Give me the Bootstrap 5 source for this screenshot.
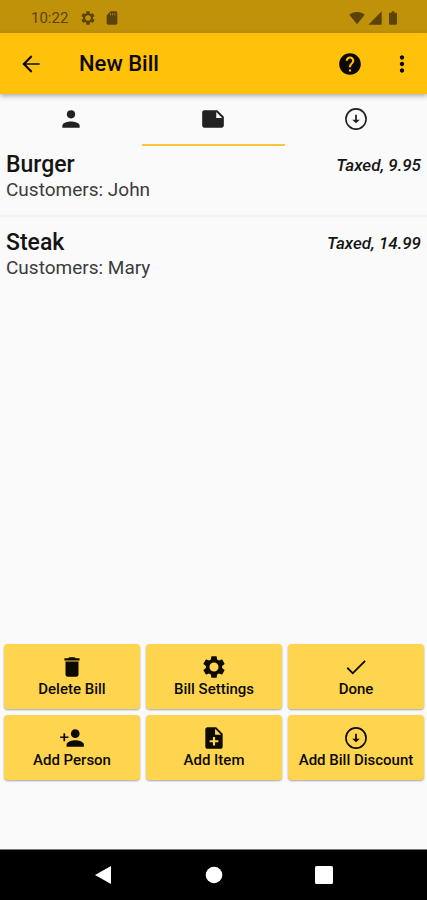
<!DOCTYPE html>
<html lang="en">
<head>
<meta charset="utf-8">
<meta name="viewport" content="width=device-width, initial-scale=1">
<title>New Bill</title>
<link rel="stylesheet" href="https://cdn.jsdelivr.net/npm/bootstrap@5.3.0/dist/css/bootstrap.min.css">
<style>
body { font-family: Roboto, "Liberation Sans", sans-serif; background: #fafafa; color: #151515; }
svg { display: block; fill: currentColor; }
.icon { width: 26px; height: 26px; }
.status-bar { height: 33px; padding: 2px 26px 0 31px; background: #c0920a; color: #5b4406; font-size: 15px; line-height: 20px; }
.status-bar .icon-sm { width: 16px; height: 16px; }
.status-left { gap: 8px; }
.status-time { margin-right: 4px; }
.status-right { gap: 2px; }
.app-bar { height: 61px; padding: 0 12px 0 18px; background: #ffc10a; color: #0c0900; box-shadow: 0 2px 5px rgba(0,0,0,.32); z-index: 1; }
.app-title { font-size: 22px; line-height: 28px; font-weight: 500; margin-left: 35px; padding-top: 1px; }
.app-bar .btn { color: inherit; }
.more-btn { margin-left: 26px; }
.tab-strip .nav-link { height: 52px; color: #212121; border-radius: 0; border-bottom: 2px solid transparent; padding: 0; }
.tab-strip .nav-link.active { border-bottom-color: #fcc53a; }
.bill-item { height: 71px; padding: 6px 6px 0; border-bottom: 2px solid #f3f3f3; }
.bill-item + .bill-item { height: 78px; padding-top: 13px; border-bottom: 0; }
.item-name { font-size: 23px; line-height: 26px; font-weight: 500; }
.item-price { font-size: 17px; line-height: 26px; font-weight: 500; font-style: italic; }
.item-people { font-size: 19px; line-height: 24px; color: #3c3c3c; }
.actions { display: grid; grid-template-columns: repeat(3, minmax(0, 1fr)); gap: 6px; padding: 0 3px 69px 4px; }
.actions .btn { height: 65px; padding: 0 0 1px; background: #ffd54f; color: #0c0a02; border: 0; border-radius: 4px; font-size: 15px; line-height: 18px; font-weight: 500; box-shadow: 0 1px 2px rgba(0,0,0,.35); }
.system-nav { height: 51px; background: #000; border-top: 1px solid #777; gap: 92px; }
.system-nav .btn { color: #fff; }
.system-nav svg { width: 18px; height: 18px; }
</style>
<script src="https://cdn.jsdelivr.net/npm/bootstrap@5.3.0/dist/js/bootstrap.bundle.min.js"></script>
</head>
<body>
<svg class="d-none" aria-hidden="true">
  <symbol id="gear" viewBox="0 0 24 24"><path fill-rule="evenodd" d="M19.430 12.980c.040-.320.070-.640.070-.980s-.030-.660-.070-.980l2.110-1.650c.190-.150.240-.420.120-.640l-2-3.460c-.120-.220-.390-.300-.610-.220l-2.490 1c-.520-.400-1.080-.730-1.690-.980l-.380-2.650C14.460 2.180 14.250 2 14 2h-4c-.250 0-.460.180-.490.420l-.380 2.650c-.610.250-1.170.590-1.690.980l-2.490-1c-.230-.090-.490 0-.610.220l-2 3.460c-.130.220-.070.490.120.640l2.110 1.650c-.040.320-.070.650-.070.980s.030.660.070.980l-2.110 1.650c-.190.150-.240.420-.120.640l2 3.460c.120.220.390.300.610.220l2.490-1c.520.400 1.080.730 1.690.980l.380 2.650c.030.240.240.420.490.420h4c.250 0 .460-.180.490-.420l.380-2.650c.610-.250 1.170-.590 1.690-.980l2.490 1c.230.090.490 0 .610-.220l2-3.460c.120-.220.070-.490-.120-.640l-2.110-1.650zM12 16.200a4.200 4.200 0 1 1 0-8.400 4.200 4.200 0 0 1 0 8.400z"/></symbol>
  <symbol id="discount" viewBox="0 0 24 24"><circle cx="12" cy="12" r="9.300" fill="none" stroke="currentColor" stroke-width="1.500"/><path d="M11.200 8h1.600v4.600h2.700L12 16l-3.500-3.400h2.700z"/></symbol>
</svg>
<div class="d-flex flex-column min-vh-100">
  <div class="status-bar d-flex align-items-center justify-content-between">
    <div class="status-left d-flex align-items-center">
      <span class="status-time">10:22</span>
      <svg class="icon-sm"><use href="#gear"/></svg>
      <svg class="icon-sm" viewBox="0 0 24 24"><path fill-rule="evenodd" d="M18 2h-8L4 8v12c0 1.100.9 2 2 2h12c1.100 0 2-.9 2-2V4c0-1.100-.9-2-2-2zM9 8V5h1.200v3zm3.400 0V5h1.200v3zm3.400 0V5H17v3z"/></svg>
    </div>
    <div class="status-right d-flex align-items-center">
      <svg class="icon-sm" viewBox="0 0 24 24"><path d="M12 21.500 23.600 7C23.200 6.700 18.800 3 12 3S.8 6.700.4 7z"/></svg>
      <svg class="icon-sm" viewBox="0 0 24 24"><path d="M2 22h20V2z"/></svg>
      <svg class="icon-sm" viewBox="0 0 24 24"><path d="M16.700 4H14V2h-4v2H7.300C6.600 4 6 4.600 6 5.300v15.400c0 .7.600 1.300 1.300 1.300h9.400c.7 0 1.300-.6 1.300-1.300V5.300c0-.7-.6-1.300-1.300-1.300z"/></svg>
    </div>
  </div>
  <header class="app-bar d-flex align-items-center position-relative">
    <button type="button" class="btn p-0 border-0" aria-label="Back"><svg class="icon" viewBox="0 0 24 24"><path d="M20 11.200H7.500l5.700-5.700L12 4l-8 8 8 8 1.200-1.500-5.700-5.700H20z"/></svg></button>
    <h1 class="app-title mb-0">New Bill</h1>
    <button type="button" class="btn p-0 border-0 ms-auto" aria-label="Help"><svg class="icon" viewBox="0 0 24 24"><path d="M12 2C6.480 2 2 6.480 2 12s4.480 10 10 10 10-4.480 10-10S17.520 2 12 2zm1 17h-2v-2h2v2zm2.070-7.750-.9.920C13.450 12.900 13 13.500 13 15h-2v-.5c0-1.100.45-2.100 1.170-2.830l1.240-1.260c.37-.36.590-.86.590-1.410 0-1.100-.9-2-2-2s-2 .9-2 2H8c0-2.210 1.790-4 4-4s4 1.790 4 4c0 .88-.36 1.680-.93 2.250z"/></svg></button>
    <button type="button" class="btn p-0 border-0 more-btn" aria-label="More options"><svg class="icon" viewBox="0 0 24 24"><path d="M12 8c1.100 0 2-.9 2-2s-.9-2-2-2-2 .9-2 2 .9 2 2 2zm0 2c-1.100 0-2 .9-2 2s.9 2 2 2 2-.9 2-2-.9-2-2-2zm0 6c-1.100 0-2 .9-2 2s.9 2 2 2 2-.9 2-2-.9-2-2-2z"/></svg></button>
  </header>
  <nav class="tab-strip nav nav-fill flex-nowrap" aria-label="Bill sections">
    <a class="nav-link nav-item w-100 d-flex align-items-center justify-content-center" href="#people" aria-label="People"><svg class="icon" viewBox="0 0 24 24"><circle cx="12" cy="7.700" r="3.800"/><path d="M12 14.300c-2.670 0-8 1.200-8 3.900V20h16v-1.800c0-2.700-5.330-3.900-8-3.900z"/></svg></a>
    <a class="nav-link nav-item w-100 active d-flex align-items-center justify-content-center" href="#items" aria-label="Items" aria-current="page"><svg class="icon" viewBox="0 0 24 24"><path fill-rule="evenodd" d="M16 4H4c-1.100 0-2 .9-2 2v12.010c0 1.100.9 1.990 2 1.990h16c1.100 0 2-.9 2-2v-8l-6-6zm-1 7V5.500l5.500 5.500H15z"/></svg></a>
    <a class="nav-link nav-item w-100 d-flex align-items-center justify-content-center" href="#discounts" aria-label="Discounts"><svg class="icon"><use href="#discount"/></svg></a>
  </nav>
  <main class="flex-grow-1 d-flex flex-column">
    <ul class="list-unstyled mb-0 flex-grow-1" id="items">
      <li class="bill-item">
        <div class="d-flex justify-content-between"><span class="item-name">Burger</span><span class="item-price">Taxed, 9.95</span></div>
        <div class="item-people">Customers: John</div>
      </li>
      <li class="bill-item">
        <div class="d-flex justify-content-between"><span class="item-name">Steak</span><span class="item-price">Taxed, 14.99</span></div>
        <div class="item-people">Customers: Mary</div>
      </li>
    </ul>
    <div class="actions">
      <button type="button" class="btn d-flex flex-column align-items-center justify-content-center"><svg class="icon" viewBox="0 0 24 24"><path d="M6 19c0 1.100.9 2 2 2h8c1.100 0 2-.9 2-2V7H6v12zM19 4h-3.500l-1-1h-5l-1 1H5v2h14V4z"/></svg>Delete Bill</button>
      <button type="button" class="btn d-flex flex-column align-items-center justify-content-center"><svg class="icon"><use href="#gear"/></svg>Bill Settings</button>
      <button type="button" class="btn d-flex flex-column align-items-center justify-content-center"><svg class="icon" viewBox="0 0 24 24"><path d="M9 16.600 4.500 12.100l-1.100 1.200L9 19 21 7l-1.200-1.200z"/></svg>Done</button>
      <button type="button" class="btn d-flex flex-column align-items-center justify-content-center"><svg class="icon" viewBox="0 0 24 24"><circle cx="15" cy="8" r="4"/><path d="M15 14c-2.670 0-8 1.340-8 4v2h16v-2c0-2.660-5.330-4-8-4zM4.100 7.500h1.600v3h3V12h-3v3H4.100v-3h-3v-1.500h3z"/></svg>Add Person</button>
      <button type="button" class="btn d-flex flex-column align-items-center justify-content-center"><svg class="icon" viewBox="0 0 24 24"><path fill-rule="evenodd" d="M14 2H6c-1.100 0-2 .9-2 2v16c0 1.100.890 2 1.990 2H18c1.100 0 2-.9 2-2V8l-6-6zm2 14h-3v3h-2v-3H8v-2h3v-3h2v3h3v2zm-3-7V3.500L18.500 9H13z"/></svg>Add Item</button>
      <button type="button" class="btn d-flex flex-column align-items-center justify-content-center text-nowrap"><svg class="icon"><use href="#discount"/></svg>Add Bill Discount</button>
    </div>
  </main>
  <footer class="system-nav d-flex align-items-center justify-content-center">
    <button type="button" class="btn p-0 border-0" aria-label="System back"><svg viewBox="0 0 18 18"><path d="M16 0v18L0 9z"/></svg></button>
    <button type="button" class="btn p-0 border-0" aria-label="Home"><svg viewBox="0 0 18 18"><circle cx="9" cy="9" r="8.300"/></svg></button>
    <button type="button" class="btn p-0 border-0" aria-label="Recent apps"><svg viewBox="0 0 18 18"><rect width="18" height="18" rx="1.500"/></svg></button>
  </footer>
</div>
</body>
</html>
